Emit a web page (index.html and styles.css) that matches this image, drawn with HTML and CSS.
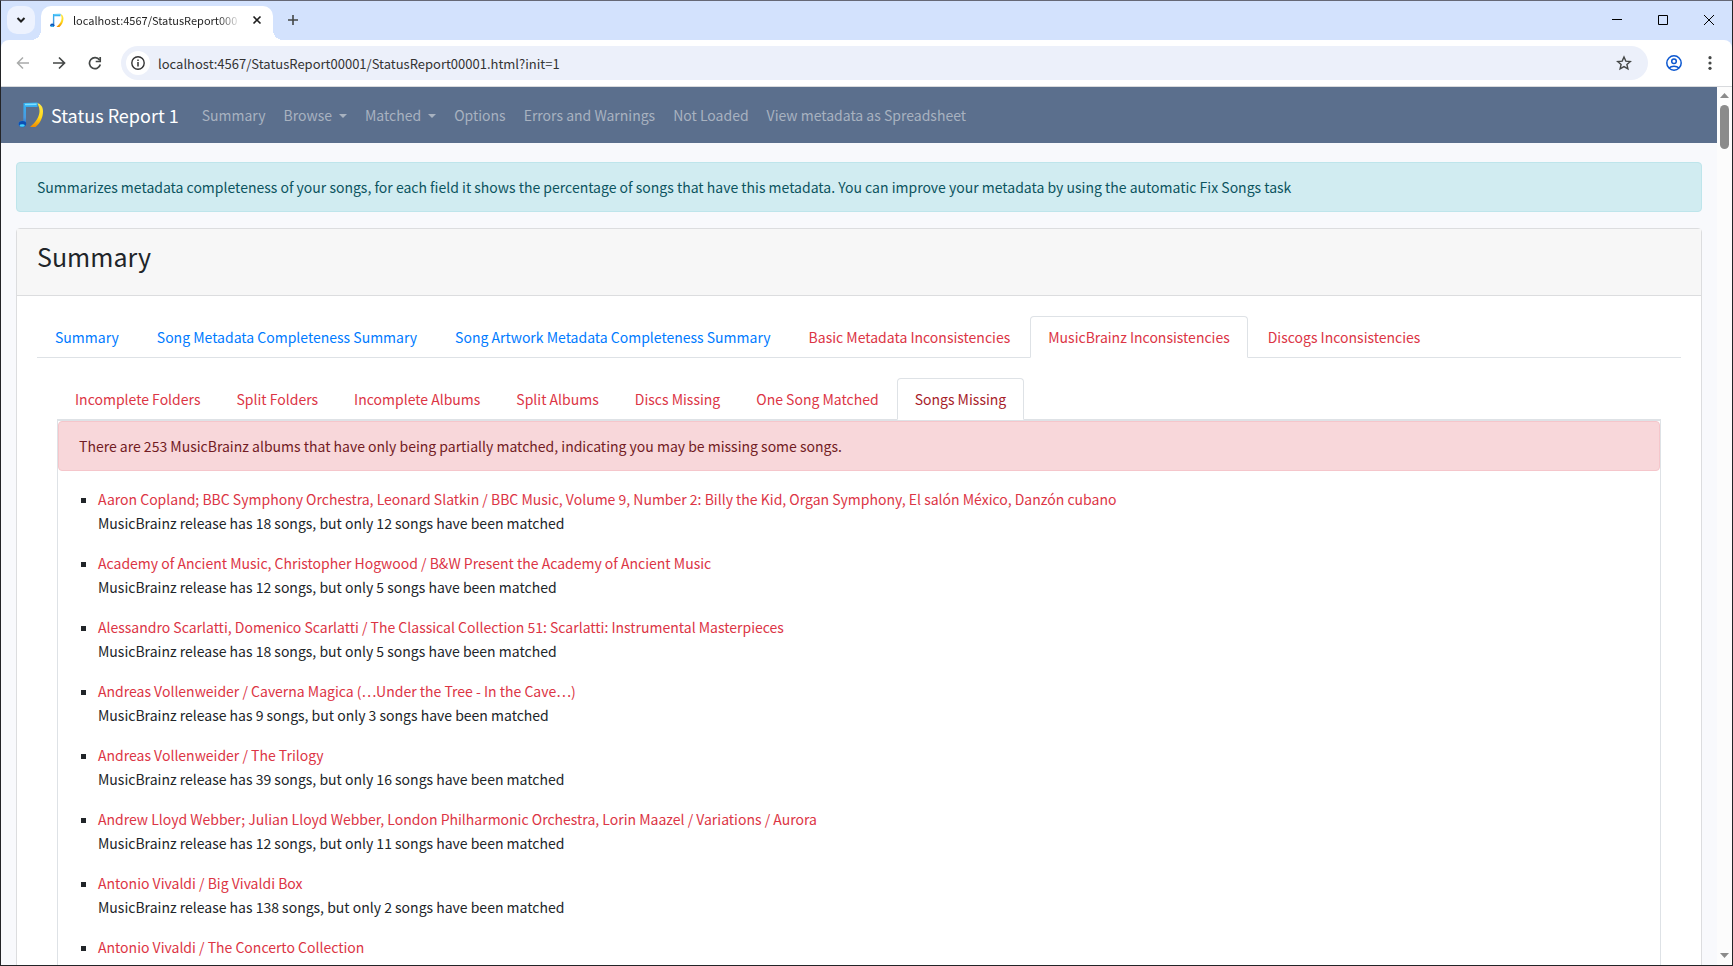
FILE: index.html
```html
<!DOCTYPE html>
<html lang="en">
<head>
    <meta charset="UTF-8">
    <meta name="viewport" content="width=device-width, initial-scale=1.0">
    <title>Status Report 1</title>
    <link rel="stylesheet" href="styles.css">
</head>
<body>
    <svg class="defs" aria-hidden="true">
        <defs>
            <linearGradient id="blue" x1="0" y1="0" x2="0" y2="1">
                <stop offset="0" stop-color="#2fb4f5"/>
                <stop offset="0.6" stop-color="#4a9be0"/>
                <stop offset="1" stop-color="#1768c8"/>
            </linearGradient>
            <linearGradient id="gold" x1="0" y1="0" x2="0" y2="1">
                <stop offset="0" stop-color="#ffe94a"/>
                <stop offset="0.6" stop-color="#ffd91a"/>
                <stop offset="1" stop-color="#f08a00"/>
            </linearGradient>
            <symbol id="note" viewBox="0 0 26 26">
                <path d="M19 1c4 1 6 4 6 8.500 0 6-3 12-7.500 15.500H12c6-5 9.500-10.500 9.500-16C21.500 6 20.500 3 19 1z" fill="url(#gold)"/>
                <path d="M5.500 1 19.500.5v4.500H8V22a3.800 3.200 0 1 1-2.700-3z" fill="url(#blue)"/>
                <path d="M7 1.800 18.500 1.500v1.500L7 3.300z" fill="#7fe0ff"/>
                <ellipse cx="4.500" cy="21.800" rx="3.700" ry="2.800" fill="#0c4fb4"/>
                <ellipse cx="4.200" cy="23.500" rx="2.600" ry="1.200" fill="#45d2fb"/>
            </symbol>
        </defs>
    </svg>

    <div class="tabstrip">
        <button class="tabsearch" aria-label="Search tabs">
            <svg width="10" height="10" viewBox="0 0 10 10"><path d="M1.500 3 5 6.500 8.500 3" fill="none" stroke="#1f1f1f" stroke-width="2"/></svg>
        </button>
        <div class="browsertab">
            <svg class="favicon" width="14" height="15"><use href="#note"/></svg>
            <span class="tabtitle">localhost:4567/StatusReport000</span>
            <button class="tabclose" aria-label="Close tab">
                <svg width="10" height="10" viewBox="0 0 10 10"><path d="M1.500 1.500l7 7M8.500 1.500l-7 7" stroke="#1f1f1f" stroke-width="1.600"/></svg>
            </button>
        </div>
        <button class="newtab" aria-label="New tab">
            <svg width="12" height="12" viewBox="0 0 12 12"><path d="M6 1v10M1 6h10" stroke="#444746" stroke-width="1.600"/></svg>
        </button>
        <div class="winbtns">
            <button aria-label="Minimize"><svg width="10" height="10" viewBox="0 0 10 10"><path d="M0 4.500h10" stroke="#000"/></svg></button>
            <button aria-label="Maximize"><svg width="10" height="10" viewBox="0 0 10 10"><path d="M.5.5h9v9h-9z" fill="none" stroke="#000"/></svg></button>
            <button aria-label="Close"><svg width="10" height="10" viewBox="0 0 10 10"><path d="M0 0l10 10M10 0L0 10" stroke="#000"/></svg></button>
        </div>
    </div>

    <div class="toolbar">
        <div class="history">
            <button aria-label="Back"><svg width="14" height="14" viewBox="0 0 14 14"><path d="M13 7H2M7 1.500 1.500 7 7 12.500" fill="none" stroke="#a9abaa" stroke-width="1.500"/></svg></button>
            <button aria-label="Forward"><svg width="14" height="14" viewBox="0 0 14 14"><path d="M1 7h11M7 1.500 12.500 7 7 12.500" fill="none" stroke="#444746" stroke-width="1.700"/></svg></button>
            <button aria-label="Reload"><svg width="14" height="14" viewBox="0 0 14 14"><path d="M12.300 8.500A5.500 5.500 0 1 1 11.500 4" fill="none" stroke="#444746" stroke-width="1.700"/><path d="M12.200 1v4.500H7.700" fill="none" stroke="#444746" stroke-width="1.700"/></svg></button>
        </div>
        <div class="omnibox">
            <button class="siteinfo" aria-label="View site information">
                <svg width="14" height="14" viewBox="0 0 14 14"><circle cx="7" cy="7" r="6.200" fill="none" stroke="#333" stroke-width="1.400"/><path d="M7 6v4.500M7 3.500V5" stroke="#333" stroke-width="1.500"/></svg>
            </button>
            <input type="text" aria-label="Address" value="localhost:4567/StatusReport00001/StatusReport00001.html?init=1">
            <button aria-label="Bookmark this page">
                <svg width="16" height="16" viewBox="0 0 16 16"><path d="M8 2l1.800 4.100 4.500.4-3.400 3 1 4.400L8 11.600l-3.900 2.300 1-4.400-3.400-3 4.500-.4z" fill="none" stroke="#444746" stroke-width="1.400"/></svg>
            </button>
        </div>
        <button class="profile" aria-label="Profile">
            <svg width="16" height="16" viewBox="0 0 16 16" fill="none" stroke="#0b57d0" stroke-width="1.500"><circle cx="8" cy="8" r="7.200"/><circle cx="8" cy="6.300" r="2.300"/><path d="M3 13c2.500-2.300 7.500-2.300 10 0"/></svg>
        </button>
        <button class="menu" aria-label="Menu">
            <svg width="4" height="14" viewBox="0 0 4 14" fill="#444746"><circle cx="2" cy="1.700" r="1.600"/><circle cx="2" cy="7" r="1.600"/><circle cx="2" cy="12.300" r="1.600"/></svg>
        </button>
    </div>

    <div class="viewport">
        <div class="page">
            <nav class="navbar">
                <a class="navbar-brand" href="#"><svg width="26" height="26"><use href="#note"/></svg>Status Report 1</a>
                <a class="nav-item" href="#">Summary</a>
                <a class="nav-item dropdown" href="#">Browse</a>
                <a class="nav-item dropdown" href="#">Matched</a>
                <a class="nav-item" href="#">Options</a>
                <a class="nav-item" href="#">Errors and Warnings</a>
                <a class="nav-item" href="#">Not Loaded</a>
                <a class="nav-item" href="#">View metadata as Spreadsheet</a>
            </nav>
            <main>
                <div class="alert alert-info">Summarizes metadata completeness of your songs, for each field it shows the percentage of songs that have this metadata. You can improve your metadata by using the automatic Fix Songs task</div>
                <div class="card">
                    <div class="card-header"><h3>Summary</h3></div>
                    <div class="card-body">
                        <div class="tabs">
                            <a href="#">Summary</a>
                            <a href="#">Song Metadata Completeness Summary</a>
                            <a href="#">Song Artwork Metadata Completeness Summary</a>
                            <a class="danger" href="#">Basic Metadata Inconsistencies</a>
                            <a class="danger active" href="#">MusicBrainz Inconsistencies</a>
                            <a class="danger" href="#">Discogs Inconsistencies</a>
                        </div>
                        <div class="tab-content">
                            <div class="tabs subtabs">
                                <a class="danger" href="#">Incomplete Folders</a>
                                <a class="danger" href="#">Split Folders</a>
                                <a class="danger" href="#">Incomplete Albums</a>
                                <a class="danger" href="#">Split Albums</a>
                                <a class="danger" href="#">Discs Missing</a>
                                <a class="danger" href="#">One Song Matched</a>
                                <a class="danger active focus" href="#">Songs Missing</a>
                            </div>
                            <div class="panel">
                                <div class="alert alert-danger">There are 253 MusicBrainz albums that have only being partially matched, indicating you may be missing some songs.</div>
                                <ul class="albums">
                                    <li><a href="#">Aaron Copland; BBC Symphony Orchestra, Leonard Slatkin / BBC Music, Volume 9, Number 2: Billy the Kid, Organ Symphony, El salón México, Danzón cubano</a><br>MusicBrainz release has 18 songs, but only 12 songs have been matched</li>
                                    <li><a href="#">Academy of Ancient Music, Christopher Hogwood / B&amp;W Present the Academy of Ancient Music</a><br>MusicBrainz release has 12 songs, but only 5 songs have been matched</li>
                                    <li><a href="#">Alessandro Scarlatti, Domenico Scarlatti / The Classical Collection 51: Scarlatti: Instrumental Masterpieces</a><br>MusicBrainz release has 18 songs, but only 5 songs have been matched</li>
                                    <li><a href="#">Andreas Vollenweider / Caverna Magica (…Under the Tree - In the Cave…)</a><br>MusicBrainz release has 9 songs, but only 3 songs have been matched</li>
                                    <li><a href="#">Andreas Vollenweider / The Trilogy</a><br>MusicBrainz release has 39 songs, but only 16 songs have been matched</li>
                                    <li><a href="#">Andrew Lloyd Webber; Julian Lloyd Webber, London Philharmonic Orchestra, Lorin Maazel / Variations / Aurora</a><br>MusicBrainz release has 12 songs, but only 11 songs have been matched</li>
                                    <li><a href="#">Antonio Vivaldi / Big Vivaldi Box</a><br>MusicBrainz release has 138 songs, but only 2 songs have been matched</li>
                                    <li><a href="#">Antonio Vivaldi / The Concerto Collection</a></li>
                                </ul>
                            </div>
                        </div>
                    </div>
                </div>
            </main>
        </div>
        <div class="scrollbar" aria-hidden="true">
            <svg width="9" height="5" viewBox="0 0 9 5"><path d="M0 5 4.500 0 9 5z" fill="#8b8b8b"/></svg>
            <div class="thumb"></div>
            <svg width="9" height="5" viewBox="0 0 9 5"><path d="M0 0 4.500 5 9 0z" fill="#8b8b8b"/></svg>
        </div>
    </div>
</body>
</html>
```
FILE: styles.css
```css
* {
    box-sizing: border-box;
}

body {
    margin: 0;
    height: 100vh;
    display: flex;
    flex-direction: column;
    overflow: hidden;
    border: 1px solid #232427;
    border-top-color: #666876;
    background-color: #d3e2fd;
    color: #212529;
    font-family: "Noto Sans CJK SC", "Noto Sans", sans-serif;
    font-size: 14px;
    line-height: 24px;
}

a {
    color: #007bff;
    text-decoration: none;
}

button {
    display: flex;
    align-items: center;
    justify-content: center;
    flex: none;
    width: 28px;
    height: 28px;
    padding: 0;
    border: 0;
    background: none;
}

.defs {
    position: absolute;
    width: 0;
    height: 0;
}

/* browser tabs */
.tabstrip {
    display: flex;
    flex: none;
    height: 39px;
    padding: 5px 0 0 6px;
}

.tabsearch {
    border-radius: 10px;
    background-color: #edf2fe;
}

.browsertab {
    position: relative;
    display: flex;
    align-items: center;
    width: 232px;
    height: 34px;
    margin-left: 6px;
    padding: 0 7px 6px 9px;
    border-radius: 10px 10px 0 0;
    background-color: #fff;
}

.browsertab::before,
.browsertab::after {
    content: "";
    position: absolute;
    bottom: 0;
    width: 10px;
    height: 10px;
}

.browsertab::before {
    left: -10px;
    background: radial-gradient(circle at 0 0, transparent 10px, #fff 10px);
}

.browsertab::after {
    right: -10px;
    background: radial-gradient(circle at 100% 0, transparent 10px, #fff 10px);
}

.favicon {
    flex: none;
}

.tabtitle {
    flex: 1;
    min-width: 0;
    margin: 0 7px 0 9px;
    white-space: nowrap;
    color: #1f1f1f;
    font-size: 11px;
    -webkit-mask-image: linear-gradient(to right, #000 86%, transparent);
    mask-image: linear-gradient(to right, #000 86%, transparent);
}

.tabclose {
    width: 18px;
}

.newtab {
    margin-left: 6px;
}

.winbtns {
    display: flex;
    margin-left: auto;
}

.winbtns button {
    width: 46px;
}

/* address bar */
.toolbar {
    display: flex;
    flex: none;
    align-items: center;
    height: 47px;
    padding: 0 8px;
    border-bottom: 1px solid #d8dadd;
    border-radius: 8px 8px 0 0;
    background-color: #fff;
}

.history {
    display: flex;
    gap: 8px;
}

.omnibox {
    display: flex;
    flex: 1;
    align-items: center;
    height: 34px;
    margin: 0 12px;
    padding: 0 10px 0 5px;
    border-radius: 17px;
    background-color: #ecf0fa;
}

.siteinfo {
    width: 24px;
    height: 24px;
    border-radius: 12px;
    background-color: #fff;
}

.omnibox input {
    flex: 1;
    min-width: 0;
    padding: 0 8px;
    border: 0;
    outline: 0;
    background: none;
    color: #333;
    font-family: inherit;
    font-size: 13px;
}

.menu {
    margin-left: 8px;
}

.viewport {
    display: flex;
    flex: 1;
    min-height: 0;
    overflow: hidden;
}

.page {
    flex: 1;
    min-width: 0;
    overflow: hidden;
    background-color: #f8f9fc;
}

.scrollbar {
    display: flex;
    flex-direction: column;
    align-items: center;
    width: 15px;
    padding: 6px 0 7px;
    background-color: #fcfcfc;
}

.thumb {
    width: 9px;
    height: 44px;
    margin: 7px 0 auto;
    border-radius: 5px;
    background-color: #8b8b8b;
}

/* report */
.navbar {
    display: flex;
    align-items: center;
    gap: 2px;
    height: 56px;
    padding: 0 17px;
    background-color: #5b6f8d;
}

.navbar-brand {
    display: flex;
    align-items: center;
    gap: 7px;
    margin-right: 13px;
    color: #fff;
    font-size: 18px;
}

.nav-item {
    padding: 8px;
    color: #a8b2c0;
}

.dropdown::after {
    content: "";
    display: inline-block;
    margin-left: 7px;
    vertical-align: 3px;
    border-top: 4px solid;
    border-left: 4px solid transparent;
    border-right: 4px solid transparent;
}

main {
    padding: 19px 15px;
}

.alert {
    padding: 12px 20px;
    border: 1px solid;
    border-radius: 4px;
    margin-bottom: 16px;
}

.alert-info {
    color: #0c5460;
    background-color: #d1ecf1;
    border-color: #bee5eb;
}

.alert-danger {
    color: #721c24;
    background-color: #f8d7da;
    border-color: #f5c6cb;
}

.card {
    border: 1px solid #dcdddf;
    border-radius: 4px;
    background-color: #fff;
}

.card-header {
    padding: 12px 20px;
    border-bottom: 1px solid #dcdddf;
    background-color: #f7f7f7;
}

h3 {
    margin: 0 0 12px;
    font-size: 25px;
    font-weight: 400;
    line-height: 30px;
}

.card-body {
    padding: 20px;
}

.tabs {
    display: flex;
    gap: 2px;
    border-bottom: 1px solid #dee2e6;
}

.subtabs {
    gap: 0;
}

.tabs a {
    margin-bottom: -1px;
    padding: 8px 17px;
    border: 1px solid transparent;
    border-radius: 4px 4px 0 0;
}

.tabs .danger {
    color: #dc3545;
}

.tabs .active {
    border-color: #dee2e6 #dee2e6 #fff;
    background-color: #fff;
}

.tabs .focus {
    color: #a71d2a;
}

.tab-content {
    padding: 20px;
}

.panel {
    border: 1px solid #dee2e6;
}

.albums {
    margin: 0;
    padding-left: 40px;
    list-style: square;
}

.albums li {
    margin-bottom: 16px;
}

.albums a {
    color: #dc3545;
}
```
